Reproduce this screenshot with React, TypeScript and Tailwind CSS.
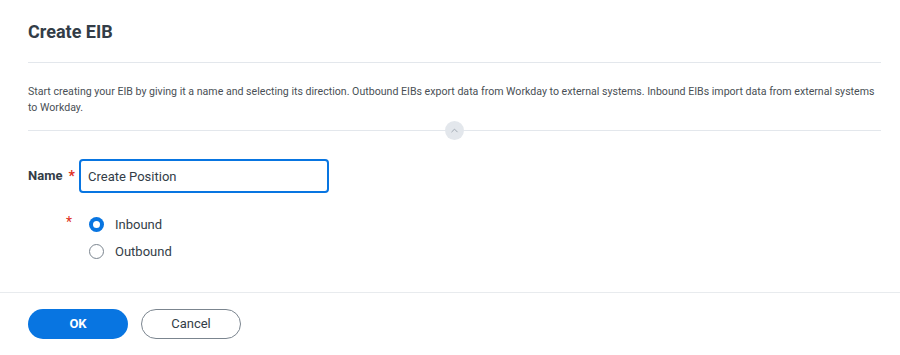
import { ChevronUp } from "lucide-react";

export default function App() {
  return (
    <div
      className="flex h-[355px] w-[900px] flex-col bg-white text-[#333d47]"
      style={{ fontFamily: "Roboto, 'Liberation Sans', sans-serif" }}
    >
      <div className="pr-[19px] pl-7">
        <h1 className="pt-[21px] pb-[20px] text-[18px] leading-[21px] font-bold text-[#333d47]">
          Create EIB
        </h1>
        <div className="h-px bg-[#e3e7ec]" />
        <p className="pt-[21px] text-[10.6px] leading-[16px] text-[#494f55]">
          Start creating your EIB by giving it a name and selecting its direction. Outbound EIBs
          export data from Workday to external systems. Inbound EIBs import data from external
          systems to Workday.
        </p>
        <div className="relative mt-[5px] flex items-center">
          <div className="h-px flex-1 bg-[#e3e7ec]" />
          <button
            type="button"
            className="mx-[-1px] flex h-[19px] w-[19px] items-center justify-center rounded-full bg-[#e3e7ec]"
          >
            <ChevronUp className="h-[11px] w-[11px] text-[#9aa3ad]" strokeWidth={2} />
          </button>
          <div className="h-px flex-1 bg-[#e3e7ec]" />
        </div>

        <div className="mt-[19px] flex items-center">
          <label className="flex w-[51px] items-center text-[13px] font-bold text-[#333d47]">
            Name
            <span className="ml-[6px] text-[14px] text-[#de2e21]">*</span>
          </label>
          <input
            defaultValue="Create Position"
            className="h-[34px] w-[250px] rounded-[4px] border-2 border-[#0875e1] px-[7px] text-[13px] text-[#333d47] outline-none"
          />
        </div>

        <div className="mt-[22px] flex">
          <span className="ml-[38px] w-[23px] text-[14px] leading-[14px] text-[#de2e21]">*</span>
          <div className="flex flex-col gap-[12px] pt-[2px]">
            <label className="flex items-center gap-[11px] text-[13px] leading-[15px]">
              <span className="flex h-[15px] w-[15px] items-center justify-center rounded-full bg-[#0875e1]">
                <span className="h-[7px] w-[7px] rounded-full bg-white" />
              </span>
              Inbound
            </label>
            <label className="flex items-center gap-[11px] text-[13px] leading-[15px]">
              <span className="h-[15px] w-[15px] rounded-full border border-[#7b858f] bg-white" />
              Outbound
            </label>
          </div>
        </div>
      </div>

      <div className="mt-auto border-t border-[#e8ebee] px-7 pt-[16px] pb-[16px]">
        <div className="flex gap-[13px]">
          <button
            type="button"
            className="h-[30px] w-[100px] rounded-full bg-[#0875e1] text-[13px] font-bold text-white"
          >
            OK
          </button>
          <button
            type="button"
            className="h-[30px] w-[100px] rounded-full border border-[#7b858f] bg-white text-[13px] text-[#333d47]"
          >
            Cancel
          </button>
        </div>
      </div>
    </div>
  );
}
